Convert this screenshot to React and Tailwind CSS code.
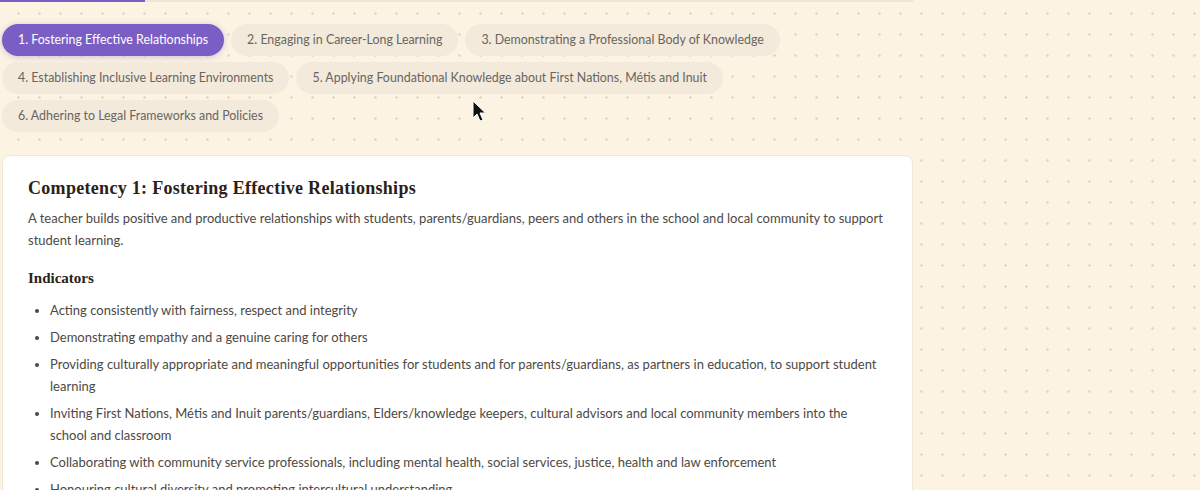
import React from 'react';

const tabs = [
  '1. Fostering Effective Relationships',
  '2. Engaging in Career-Long Learning',
  '3. Demonstrating a Professional Body of Knowledge',
  '4. Establishing Inclusive Learning Environments',
  '5. Applying Foundational Knowledge about First Nations, Métis and Inuit',
  '6. Adhering to Legal Frameworks and Policies',
];

const indicators = [
  'Acting consistently with fairness, respect and integrity',
  'Demonstrating empathy and a genuine caring for others',
  'Providing culturally appropriate and meaningful opportunities for students and for parents/guardians, as partners in education, to support student learning',
  'Inviting First Nations, Métis and Inuit parents/guardians, Elders/knowledge keepers, cultural advisors and local community members into the school and classroom',
  'Collaborating with community service professionals, including mental health, social services, justice, health and law enforcement',
  'Honouring cultural diversity and promoting intercultural understanding',
];

const Cursor = () => (
  <svg className="absolute left-[472px] top-[100px]" width="16" height="24" viewBox="0 0 16 24">
    <path d="M1 1 L1 18 L5 14 L8 21 L11 20 L8 13 L13.5 13 Z" fill="#111" stroke="#fff" strokeWidth="1" />
  </svg>
);

export default function App() {
  const active = 0;

  return (
    <div
      className="relative h-[490px] w-[1200px] overflow-hidden bg-[#fcf3e3] bg-[radial-gradient(circle,#e4d7c3_1px,transparent_1.5px)] bg-size-[21px_21px] bg-position-[8px_3px]"
      style={{ fontFamily: 'Lato, "Noto Sans", sans-serif' }}
    >
      <div className="ml-[2px] w-[911px]">
        {/* progress */}
        <div className="-ml-[2px] h-[2px] w-[913px] bg-[#efe5d5]">
          <div className="h-full w-[145px] bg-[#7a5ec4]" />
        </div>

        {/* tabs */}
        <div className="mt-[22px] flex flex-wrap gap-x-[7px] gap-y-[6px]">
          {tabs.map((t, i) => (
            <button
              key={i}
              className={
                i === active
                  ? 'h-[32px] rounded-full bg-[#7a5ec4] px-4 text-[12.4px] text-white shadow-[0_1px_6px_rgba(122,94,196,0.35)]'
                  : 'h-[32px] rounded-full bg-[#f3eadc] px-4 text-[12.4px] text-[#68655f]'
              }
            >
              {t}
            </button>
          ))}
        </div>

        {/* card */}
        <div className="mt-[23px] rounded-lg border border-[#efe7da] bg-white px-[25px] pt-[19px] pb-6">
          <h2
            className="text-[18px] font-bold tracking-[0.3px] text-[#2a2118]"
            style={{ fontFamily: '"Liberation Serif", "DejaVu Serif", serif' }}
          >
            Competency 1: Fostering Effective Relationships
          </h2>
          <p className="mt-[5px] text-[13px] leading-[22px] text-[#4d4944]">
            A teacher builds positive and productive relationships with students, parents/guardians, peers and others in the school and local community to support student learning.
          </p>

          <h3
            className="mt-[16px] text-[15px] font-bold text-[#2a2118]"
            style={{ fontFamily: '"Liberation Serif", "DejaVu Serif", serif' }}
          >
            Indicators
          </h3>
          <ul className="mt-[9px] flex flex-col gap-[5px] pl-[22px] text-[13px] leading-[22px] text-[#4d4944]">
            {indicators.map((item, i) => (
              <li key={i} className="list-disc marker:text-[#4d4944]">
                {item}
              </li>
            ))}
          </ul>
        </div>
      </div>
      <Cursor />
    </div>
  );
}
